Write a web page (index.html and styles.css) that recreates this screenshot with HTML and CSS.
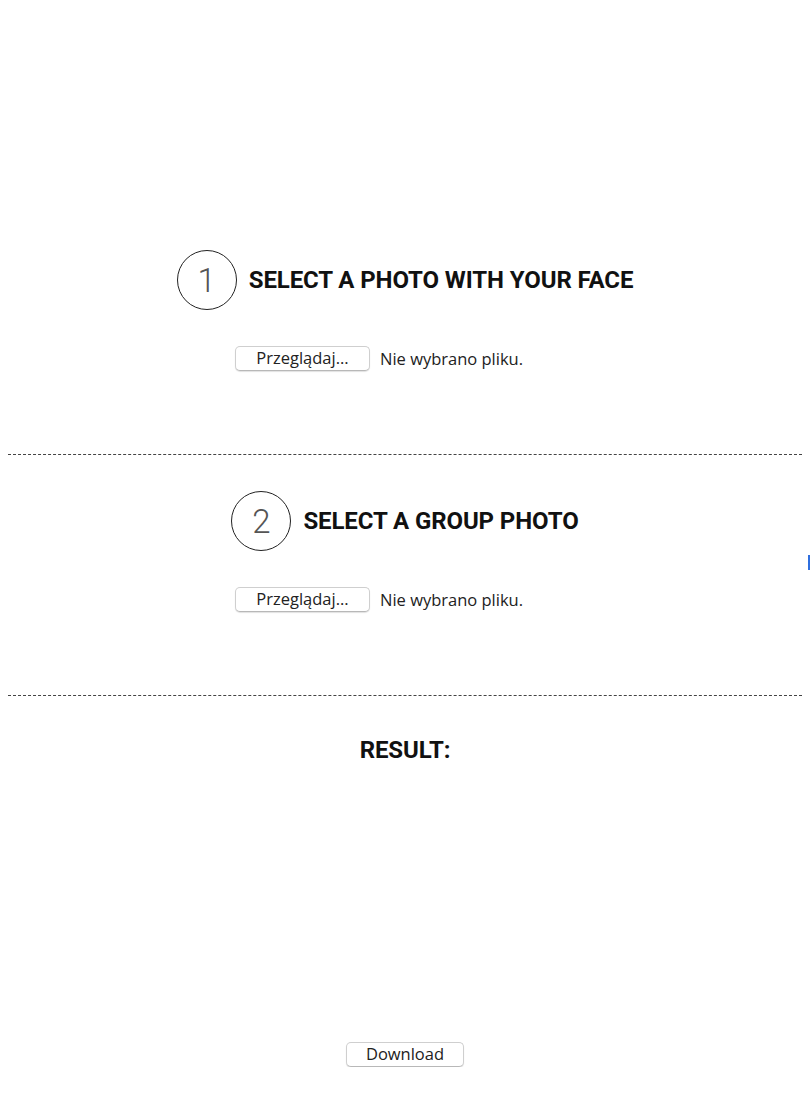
FILE: index.html
```html
<!DOCTYPE html>
<html>
<head>
    <title>Face Finder</title>
    <link rel="stylesheet" href="styles.css">
</head>
<body>
    <div class="step step-first">
        <div class="step-title">
            <span class="step-num">1</span>
            <h2>SELECT A PHOTO WITH YOUR FACE</h2>
        </div>
        <div class="file-input">
            <button class="file-btn">Przeglądaj...</button>
            <span class="file-name">Nie wybrano pliku.</span>
        </div>
    </div>

    <div class="step">
        <div class="step-title">
            <span class="step-num">2</span>
            <h2>SELECT A GROUP PHOTO</h2>
        </div>
        <div class="file-input">
            <button class="file-btn">Przeglądaj...</button>
            <span class="file-name">Nie wybrano pliku.</span>
        </div>
    </div>

    <div class="result">
        <h2>RESULT:</h2>
        <div class="result-area"></div>
        <button class="download-btn">Download</button>
    </div>

    <div class="edge-marker"></div>
</body>
</html>
```

FILE: styles.css
```css
body {
    margin: 8px;
    font-family: Roboto, "Liberation Sans", sans-serif;
    color: #111;
    background: #fff;
}
.step {
    padding-top: 36px;
    height: 204px;
    border-bottom: 1px dashed #444;
}
.step-first {
    padding-top: 242px;
}
.step-title {
    display: flex;
    align-items: center;
    justify-content: center;
    gap: 12px;
}
.step-num {
    width: 58px;
    height: 58px;
    border: 1px solid #222;
    border-radius: 50%;
    display: flex;
    align-items: center;
    justify-content: center;
    font-size: 33px;
    font-weight: 300;
    color: #555;
}
h2 {
    margin: 0;
    font-size: 24px;
    font-weight: 700;
    letter-spacing: -0.1px;
}
.file-input {
    width: 340px;
    margin: 36px auto 0;
    display: flex;
    align-items: center;
    gap: 10px;
    font-family: "Open Sans", Arial, sans-serif;
    font-size: 16.5px;
    color: #222;
}
.file-btn, .download-btn {
    font-family: "Open Sans", Arial, sans-serif;
    font-size: 16.5px;
    line-height: 1;
    color: #222;
    background: #fff;
    border: 1px solid #cfcfcf;
    border-bottom-color: #b8b8b8;
    border-radius: 5px;
    box-shadow: 0 1px 1px rgba(0,0,0,0.12);
    height: 25px;
    padding: 0;
}
.file-btn {
    width: 135px;
}
.result {
    text-align: center;
    padding-top: 40px;
}
.result-area {
    height: 278px;
}
.download-btn {
    width: 118px;
}
.edge-marker {
    position: absolute;
    left: 808px;
    top: 555px;
    width: 2px;
    height: 15px;
    background: #2f6fdf;
}
```
